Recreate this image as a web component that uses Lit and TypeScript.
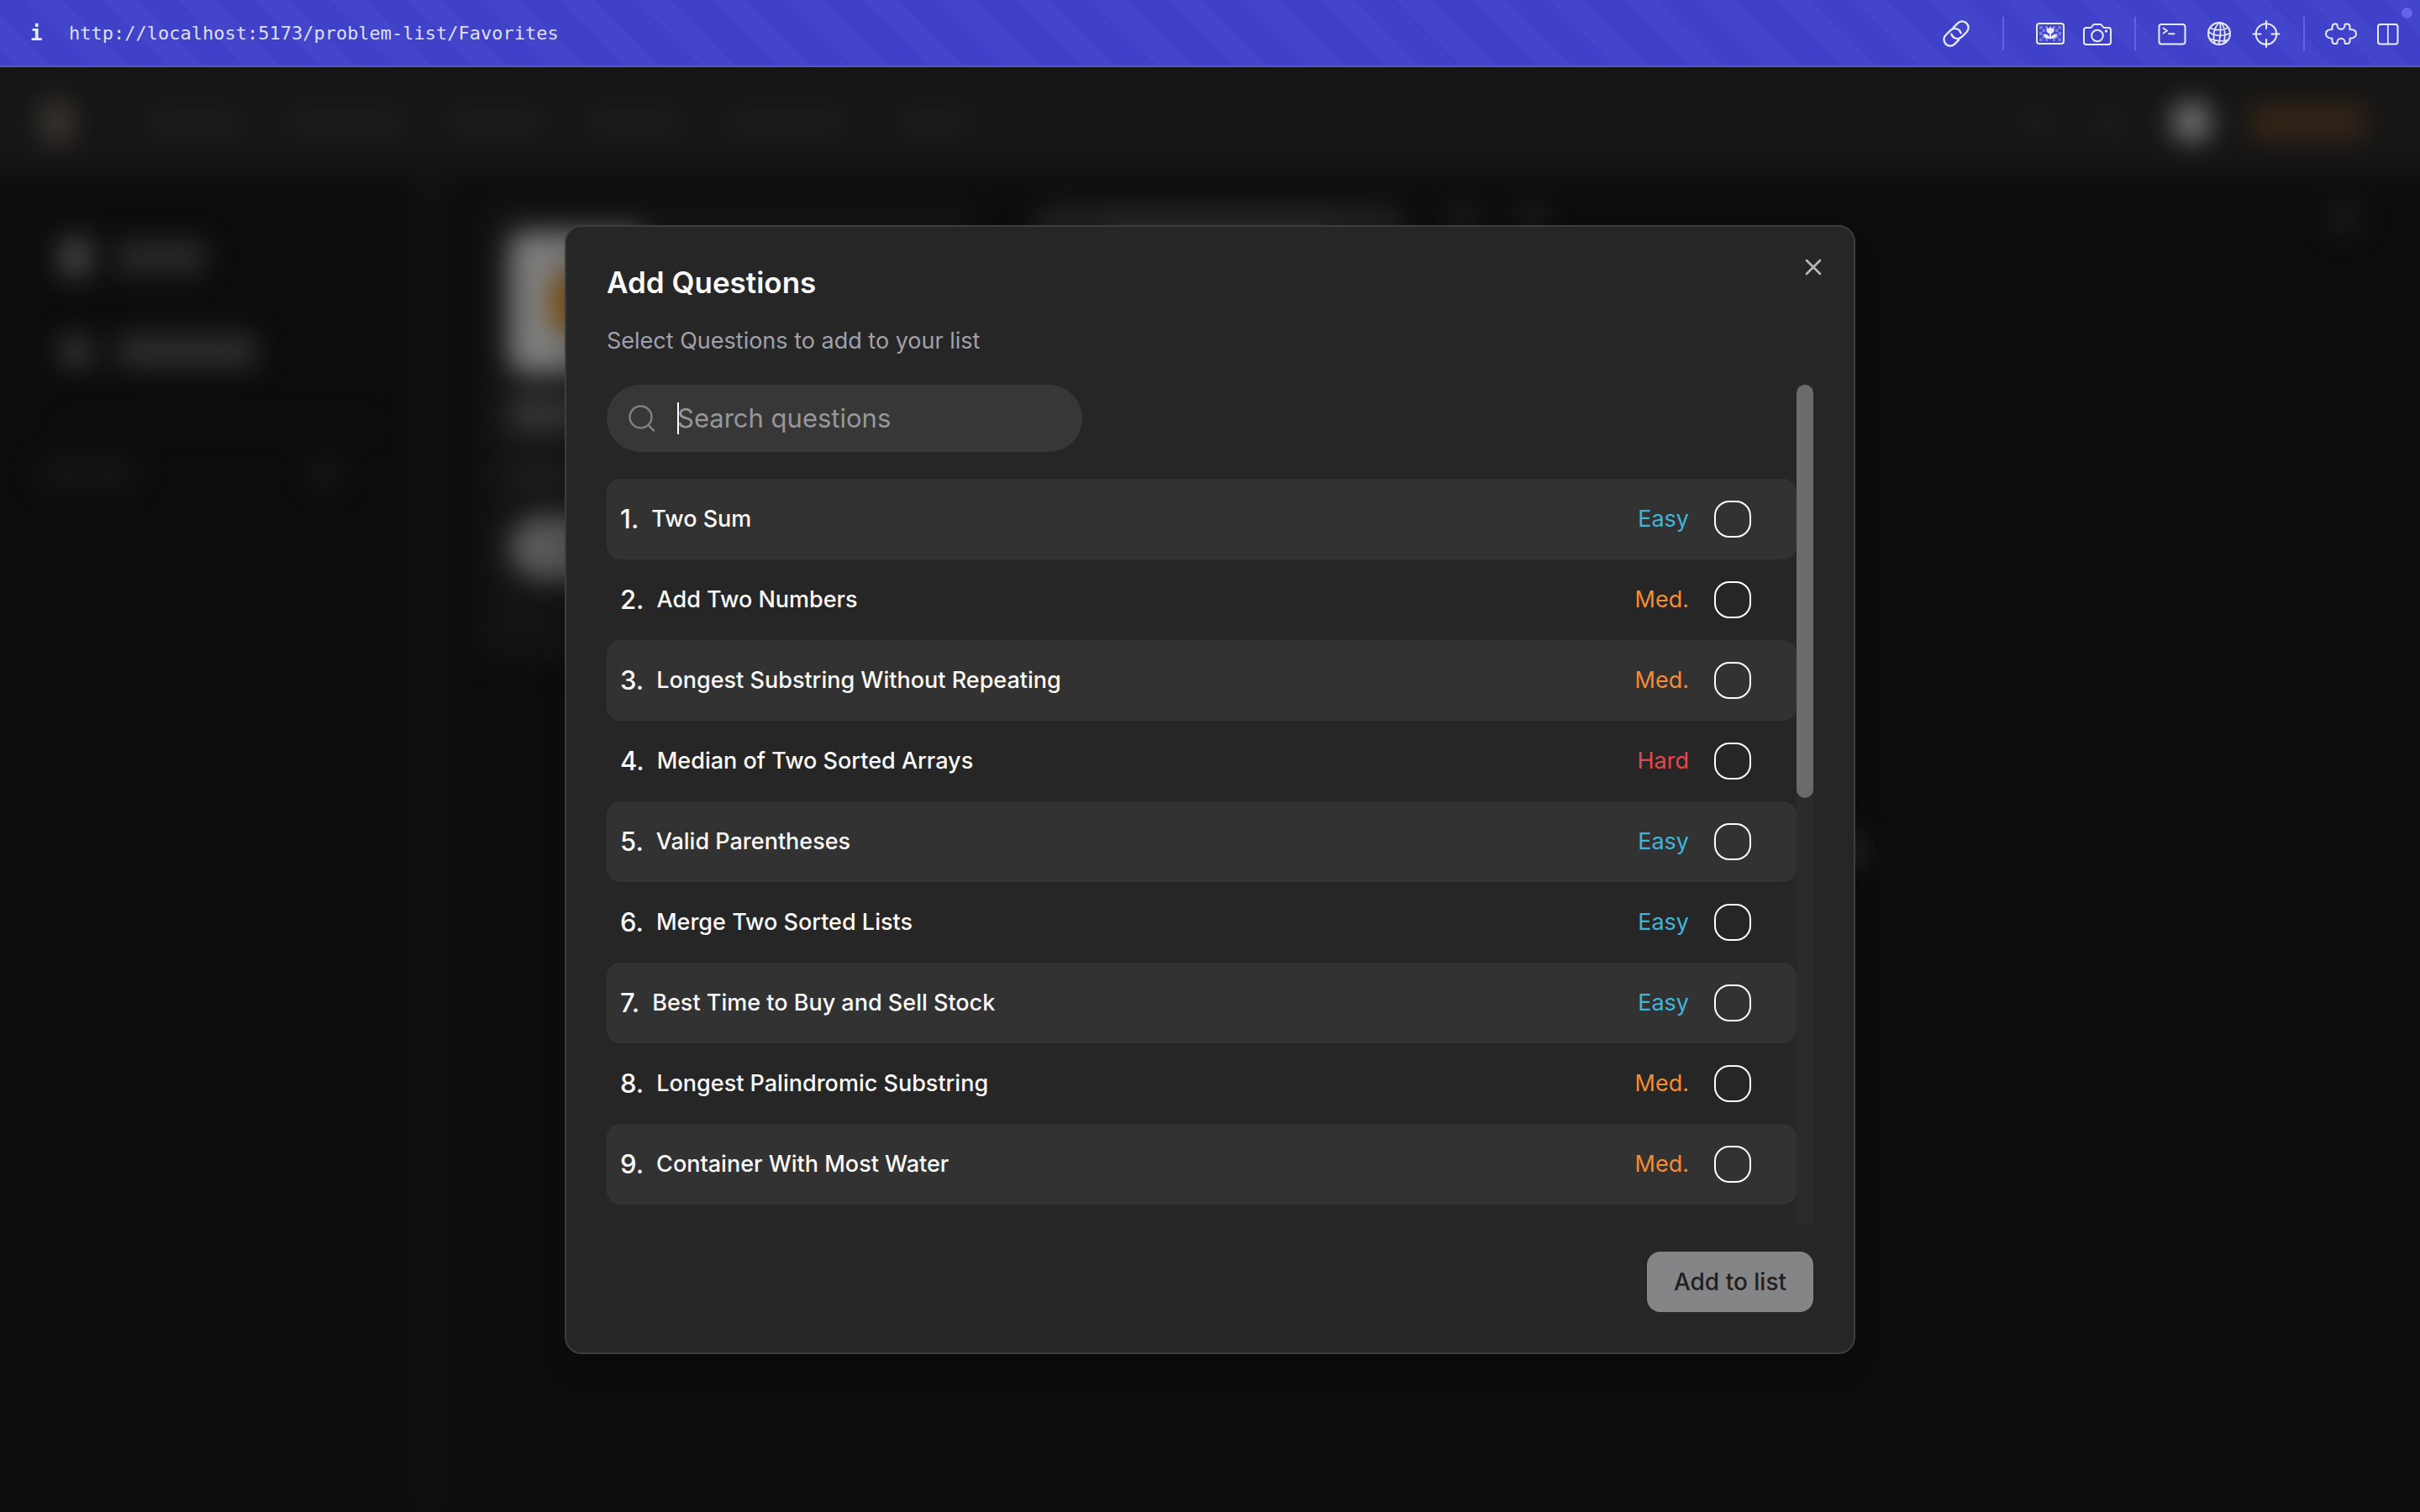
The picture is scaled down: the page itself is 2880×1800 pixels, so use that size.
import { LitElement, html, css, svg } from "lit";
import { customElement, property } from "lit/decorators.js";

type Level = "Easy" | "Med." | "Hard";

interface Question {
  id: number;
  title: string;
  level: Level;
}

const QUESTIONS: Question[] = [
  { id: 1, title: "Two Sum", level: "Easy" },
  { id: 2, title: "Add Two Numbers", level: "Med." },
  { id: 3, title: "Longest Substring Without Repeating", level: "Med." },
  { id: 4, title: "Median of Two Sorted Arrays", level: "Hard" },
  { id: 5, title: "Valid Parentheses", level: "Easy" },
  { id: 6, title: "Merge Two Sorted Lists", level: "Easy" },
  { id: 7, title: "Best Time to Buy and Sell Stock", level: "Easy" },
  { id: 8, title: "Longest Palindromic Substring", level: "Med." },
  { id: 9, title: "Container With Most Water", level: "Med." },
];

const LEVEL_CLASS: Record<Level, string> = { Easy: "easy", "Med.": "medium", Hard: "hard" };

/* Toolbar icons share a 40x40 grid centred on (20, 20). */
const ICONS = {
  link: svg`
    <g transform="rotate(-45 20 20)" stroke-width="2.3">
      <path d="M17 27.500H10a7.500 7.500 0 0 1 0-15h8a7.500 7.500 0 0 1 6.500 11" />
      <path d="M23 12.500H30a7.500 7.500 0 0 1 0 15h-8a7.500 7.500 0 0 1-6.500-11" />
    </g>`,
  picture: svg`
    <g fill="currentColor" stroke="none" opacity=".35">
      <path d="M7 11h3.500v3.500H7zM10.500 14.500h3.500v3.500h-3.500zM7 18h3.500v4H7zM10.500 22h3.500v3.500h-3.500zM7 25.500h3.500v3.500H7zM29.500 11H33v3.500h-3.500zM26 14.500h3.500v3.500H26zM29.500 18H33v4h-3.500zM26 22h3.500v3.500H26zM29.500 25.500H33v3.500h-3.500zM14 25.500h3v3.500h-3zM23 25.500h3v3.500h-3zM14 11h3v2h-3zM23 11h3v2h-3z" />
    </g>
    <rect x="4" y="8" width="32" height="24" rx="3" />
    <path fill="currentColor" stroke="none" d="M15.500 12.500l2.500 1.500 2-2.500 2 2.500 2.500-1.500v3.800a4.500 3.700 0 0 1-3.500 3.600v4.200c1-2.500 3.500-3.900 7.200-3.600-.3 3.800-3 5.700-7.200 5.700h-2c-4.200 0-6.900-1.900-7.200-5.700 3.700-.3 6.200 1.100 7.200 3.600v-4.200a4.500 3.700 0 0 1-3.500-3.600z" />`,
  camera: svg`
    <path d="M7 13h4.500c1 0 1.500-.4 2-1.200l1-1.500c.5-.9 1.200-1.300 2.200-1.300h6.600c1 0 1.700.4 2.200 1.300l1 1.500c.5.800 1 1.200 2 1.200H33c1.800 0 3 1.200 3 3v14c0 1.800-1.200 3-3 3H7c-1.800 0-3-1.200-3-3V16c0-1.800 1.200-3 3-3z" />
    <circle cx="20" cy="22.500" r="6.800" />
    <circle cx="30.500" cy="17" r="1.700" fill="currentColor" stroke="none" />`,
  terminal: svg`
    <rect x="4.500" y="9" width="31" height="23.500" rx="3" />
    <path d="M9.500 13.500l4.500 3-4.500 3M16 20.300h6.500" />`,
  globe: svg`
    <circle cx="20" cy="20" r="13" />
    <path stroke-width="1.700" d="M20 7c-6 6-8 15-5 25M21 7c1 7 .5 17-1.500 26M22 7c5 5 6 13 3.500 25M9 13c6 3.500 15 3.500 22 0M7.500 18c7 5 17 6 25.500 1.500M8.500 26c6 2.500 15 3.500 22 1.500" />`,
  target: svg`
    <circle cx="20" cy="20.500" r="12.300" />
    <path d="M20 5v9M20 27v9M4.500 20.500h9M26.500 20.500h9" />`,
  puzzle: svg`
    <path d="M9.500 15V12c0-2 1-3.500 3-3.500h1.800c1.200 0 1.200 1 1.200 1.800a4.500 4.500 0 0 0 9 0c0-.8 0-1.800 1.200-1.800h1.800c2 0 3 1.500 3 3.500v3c4.500 0 7.500 2 7.500 5.300s-3 5.400-7.500 5.400V28.500c0 2-1 3.500-3 3.500h-1.800c-1.200 0-1.200-1-1.200-1.800a4.500 4.500 0 0 0-9 0c0 .8 0 1.800-1.200 1.800h-1.800c-2 0-3-1.500-3-3.500v-2.800c-4.500 0-7.500-2.100-7.500-5.400S5 15 9.500 15z" />`,
  columns: svg`
    <rect x="8" y="9" width="23.500" height="23.500" rx="3" />
    <path d="M19.800 9v23.500" stroke-width="1.700" />`,
};

type IconName = keyof typeof ICONS;

@customElement("browser-bar")
class BrowserBar extends LitElement {
  static styles = css`
    :host {
      display: block;
    }
    .bar {
      box-sizing: border-box;
      height: 80px;
      display: flex;
      align-items: center;
      padding: 2px 10px 0 36px;
      border-bottom: 2px solid #5257d2;
      color: #e9e9fc;
      background: repeating-linear-gradient(
        45deg,
        #3f42c8 0 14px,
        #4346cb 14px 43px,
        #3f42c8 43px 64px
      );
      font-family: "DejaVu Sans Mono", "Liberation Mono", monospace;
      position: relative;
    }
    .info {
      width: 46px;
      font-size: 24px;
      font-weight: 700;
      line-height: 32px;
    }
    .address {
      flex: 1;
      font-size: 22px;
      line-height: 32px;
      color: #dedffa;
      text-decoration: none;
    }
    .tools {
      display: flex;
      align-items: center;
    }
    .tool {
      display: grid;
      place-items: center;
      width: 56px;
      height: 56px;
      padding: 0;
      border: 0;
      background: none;
      color: inherit;
    }
    .tool svg {
      width: 40px;
      height: 40px;
      fill: none;
      stroke: currentColor;
      stroke-width: 2;
      stroke-linecap: round;
      stroke-linejoin: round;
    }
    .divider {
      width: 2px;
      height: 40px;
      margin: 0 15px 0 16px;
      background: #6063e4;
    }
    .divider.wide {
      margin: 0 27px;
    }
    .dot {
      position: absolute;
      top: 9px;
      right: 9px;
      width: 13px;
      height: 13px;
      border-radius: 50%;
      background: #6564ea;
    }
  `;

  private tool(name: IconName, label: string) {
    return html`<button class="tool" type="button" aria-label=${label}>
      <svg viewBox="0 0 40 40" aria-hidden="true">${ICONS[name]}</svg>
    </button>`;
  }

  render() {
    return html`
      <header class="bar">
        <span class="info">i</span>
        <a class="address" href="http://localhost:5173/problem-list/Favorites"
          >http://localhost:5173/problem-list/Favorites</a
        >
        <div class="tools">
          ${this.tool("link", "Copy link")}
          <span class="divider wide"></span>
          ${this.tool("picture", "Capture area")} ${this.tool("camera", "Screenshot")}
          <span class="divider"></span>
          ${this.tool("terminal", "Console")} ${this.tool("globe", "Network")}
          ${this.tool("target", "Inspect")}
          <span class="divider"></span>
          ${this.tool("puzzle", "Extensions")} ${this.tool("columns", "Split view")}
        </div>
        <span class="dot"></span>
      </header>
    `;
  }
}

/* The dimmed, out-of-focus page that lies behind the dialog. */
@customElement("page-backdrop")
class PageBackdrop extends LitElement {
  static styles = css`
    :host {
      display: block;
      overflow: hidden;
      background: #0d0d0d;
    }
    .page {
      min-height: 100%;
      display: flex;
      flex-direction: column;
      filter: blur(16px);
    }
    .nav {
      display: flex;
      align-items: center;
      gap: 50px;
      margin: -40px -40px 0;
      padding: 40px 104px 0 88px;
      height: 130px;
      background: #151515;
    }
    .logo {
      width: 40px;
      height: 56px;
      border-radius: 16px;
      margin-right: 36px;
      background: linear-gradient(90deg, #3a3937, #3c3228);
    }
    .word {
      height: 28px;
      border-radius: 8px;
      background: #1e1e1e;
    }
    .w90 { width: 88px; margin-left: 12px; }
    .w110 { width: 116px; }
    .w140 { width: 142px; }
    .grow { flex: 1; }
    .glyph {
      width: 36px;
      height: 36px;
      border-radius: 50%;
      background: #1d1d1d;
    }
    .avatar {
      width: 48px;
      height: 48px;
      border-radius: 50%;
      margin: 0 -6px 0 6px;
      background: #747474;
    }
    .premium {
      width: 140px;
      height: 44px;
      border-radius: 12px;
      background: #352517;
    }
    .body {
      flex: 1;
      display: grid;
      grid-template-columns: 524px 1fr;
    }
    .side {
      border-right: 24px solid #141414;
      padding: 72px 48px 0 72px;
      display: flex;
      flex-direction: column;
      gap: 64px;
    }
    .entry {
      display: flex;
      align-items: center;
      gap: 32px;
      height: 48px;
    }
    .entry .mark {
      width: 36px;
      height: 44px;
      background: #484848;
    }
    .entry.plan .mark {
      height: 32px;
      background: #3a3a3a;
    }
    .entry .name {
      width: 104px;
      height: 36px;
      background: #2c2c2c;
    }
    .entry.plan .name {
      width: 164px;
      background: #303030;
    }
    .rule {
      height: 3px;
      background: #1a1a1a;
    }
    .lists {
      display: flex;
      justify-content: space-between;
      margin: -24px 48px 0 -24px;
    }
    .lists .label {
      width: 112px;
      height: 28px;
      background: #171717;
    }
    .lists .plus {
      width: 36px;
      height: 28px;
      background: #181818;
    }
    .main {
      display: grid;
      grid-template-columns: 592px 1fr;
      gap: 64px;
      align-items: start;
      padding: 28px 72px 0 46px;
    }
    .card {
      box-sizing: border-box;
      height: 548px;
      padding: 38px 36px;
      border-radius: 24px;
      background: #131313;
      display: flex;
      flex-direction: column;
      align-items: start;
      gap: 24px;
    }
    .cover {
      display: grid;
      place-items: center;
      width: 164px;
      height: 168px;
      border-radius: 16px;
      background: #7c7c7c;
    }
    .cover .star {
      width: 64px;
      height: 72px;
      border-radius: 24px;
      background: #80510f;
    }
    .heading {
      width: 200px;
      height: 48px;
      background: #333;
    }
    .note {
      width: 240px;
      height: 30px;
      margin: 12px 0 8px;
      background: #1f1f1f;
    }
    .pill {
      width: 240px;
      height: 76px;
      border-radius: 40px;
      background: #595959;
    }
    .row {
      display: flex;
      align-items: start;
      gap: 48px;
    }
    .query {
      display: grid;
      place-items: center;
      width: 448px;
      height: 68px;
      border-radius: 34px;
      background: #1f1f1f;
    }
    .query .hint {
      width: 270px;
      height: 28px;
      background: #2a2a2a;
    }
    .column {
      display: flex;
      flex-direction: column;
      gap: 686px;
      padding-top: 4px;
    }
    .line {
      align-self: start;
      margin-left: 500px;
      width: 490px;
      height: 36px;
      background: #282828;
    }
  `;

  render() {
    return html`
      <div class="page" aria-hidden="true">
        <div class="nav">
          <div class="logo"></div>
          <div class="word w110"></div>
          <div class="word w140"></div>
          <div class="word w110"></div>
          <div class="word w110"></div>
          <div class="word w140"></div>
          <div class="word w90"></div>
          <div class="grow"></div>
          <div class="glyph"></div>
          <div class="glyph"></div>
          <div class="avatar"></div>
          <div class="premium"></div>
        </div>
        <div class="body">
          <div class="side">
            <div class="entry"><div class="mark"></div><div class="name"></div></div>
            <div class="entry plan"><div class="mark"></div><div class="name"></div></div>
            <div class="rule"></div>
            <div class="lists"><div class="label"></div><div class="plus"></div></div>
          </div>
          <div class="main">
            <div class="card">
              <div class="cover"><div class="star"></div></div>
              <div class="heading"></div>
              <div class="note"></div>
              <div class="pill"></div>
            </div>
            <div class="column">
              <div class="row">
                <div class="query"><div class="hint"></div></div>
                <div class="glyph"></div>
                <div class="glyph"></div>
                <div class="grow"></div>
                <div class="glyph"></div>
              </div>
              <div class="line"></div>
            </div>
          </div>
        </div>
      </div>
    `;
  }
}

@customElement("question-row")
class QuestionRow extends LitElement {
  @property({ attribute: false }) question!: Question;

  static styles = css`
    :host {
      display: block;
    }
    .row {
      display: flex;
      align-items: center;
      height: 96px;
      padding: 0 54px 0 16px;
      border-radius: 16px;
      font-size: 27px;
      font-weight: 500;
      line-height: 40px;
      color: #fafafa;
    }
    .striped {
      background: #323232;
    }
    .number {
      margin-right: 15px;
      font-size: 31px;
    }
    .title {
      flex: 1;
    }
    .level {
      margin-right: 30px;
      font-weight: 400;
    }
    .easy { color: #40b5dc; }
    .medium { color: #f28d35; }
    .hard { color: #e5484d; }
    .check {
      appearance: none;
      box-sizing: border-box;
      width: 44px;
      height: 44px;
      margin: 0;
      border: 2px solid #fff;
      border-radius: 18px;
    }
    .check:checked {
      background: #40b5dc;
    }
  `;

  render() {
    const q = this.question;
    return html`
      <label class="row ${q.id % 2 ? "striped" : ""}">
        <span class="number">${q.id}.</span>
        <span class="title">${q.title}</span>
        <span class="level ${LEVEL_CLASS[q.level]}">${q.level}</span>
        <input class="check" type="checkbox" />
      </label>
    `;
  }
}

@customElement("add-questions-dialog")
class AddQuestionsDialog extends LitElement {
  static styles = css`
    :host {
      display: block;
    }
    .dialog {
      position: relative;
      box-sizing: border-box;
      display: flex;
      flex-direction: column;
      gap: 32px;
      padding: 48px;
      border: 2px solid #3d3d3d;
      border-radius: 20px;
      background: #262626;
      box-shadow: 0 20px 30px rgba(0, 0, 0, 0.2);
      color: #fafafa;
    }
    .heading {
      margin: 0;
      font-size: 35px;
      font-weight: 600;
      line-height: 36px;
    }
    .summary {
      margin: 0;
      font-size: 27px;
      line-height: 40px;
      color: #a1a1aa;
    }
    .close {
      position: absolute;
      top: 32px;
      right: 32px;
      width: 32px;
      height: 32px;
      padding: 0;
      border: 0;
      background: none;
      color: #b9b9b9;
    }
    .close svg {
      display: block;
      width: 32px;
      height: 32px;
    }
    .viewport {
      display: grid;
      grid-template-columns: 1fr 20px;
      height: 1000px;
    }
    .scroller {
      min-height: 0;
      overflow-y: scroll;
      scrollbar-width: none;
    }
    .track {
      display: flex;
      flex-direction: column;
      min-height: 0;
      background: #2b2b2b;
    }
    .thumb {
      height: 492px;
      border-radius: 10px;
      background: #6b6b6b;
    }
    .search {
      position: relative;
      box-sizing: border-box;
      display: flex;
      align-items: center;
      gap: 24px;
      width: 566px;
      height: 80px;
      margin-bottom: 32px;
      padding: 0 24px;
      border-radius: 40px;
      background: #373737;
    }
    .search svg {
      flex: none;
      width: 36px;
      height: 36px;
      color: #808080;
    }
    .field {
      flex: 1;
      min-width: 0;
      padding: 0;
      border: 0;
      outline: 0;
      background: none;
      color: #fff;
      font: inherit;
      font-size: 31px;
      line-height: 40px;
    }
    .field::placeholder {
      color: #979797;
      opacity: 1;
    }
    .caret {
      position: absolute;
      left: 84px;
      top: 21px;
      width: 2px;
      height: 38px;
      background: #fff;
    }
    .rows {
      min-height: 1920px;
      margin: 0;
      padding: 0;
      list-style: none;
    }
    .footer {
      display: flex;
      justify-content: flex-end;
    }
    .submit {
      height: 72px;
      padding: 0 32px;
      border: 0;
      border-radius: 16px;
      background: #858587;
      color: #202021;
      font: inherit;
      font-size: 28px;
      font-weight: 500;
    }
  `;

  render() {
    return html`
      <section class="dialog" role="dialog" aria-labelledby="heading">
        <h2 class="heading" id="heading">Add Questions</h2>
        <p class="summary">Select Questions to add to your list</p>
        <div class="viewport">
          <div class="scroller">
            <label class="search">
              <svg viewBox="0 0 36 36" fill="none" stroke="currentColor" stroke-width="2.5" stroke-linecap="round" aria-hidden="true">
                <circle cx="16.5" cy="16.5" r="13" />
                <path d="M26 26.5l6 6" />
              </svg>
              <input class="field" type="text" placeholder="Search questions" aria-label="Search questions" />
              <span class="caret"></span>
            </label>
            <ul class="rows">
              ${QUESTIONS.map(
                (q) => html`<li><question-row .question=${q}></question-row></li>`
              )}
            </ul>
          </div>
          <div class="track" aria-hidden="true"><div class="thumb"></div></div>
        </div>
        <div class="footer">
          <button class="submit" type="button">Add to list</button>
        </div>
        <button class="close" type="button" aria-label="Close">
          <svg viewBox="0 0 24 24" fill="none" stroke="currentColor" stroke-width="2" stroke-linecap="round" aria-hidden="true">
            <path d="M6 6l12 12M18 6L6 18" />
          </svg>
        </button>
      </section>
    `;
  }
}

@customElement("app-root")
class AppRoot extends LitElement {
  static styles = css`
    :host {
      display: flex;
      flex-direction: column;
      min-height: 100vh;
      background: #0d0d0d;
      font-family: Inter, "Liberation Sans", sans-serif;
    }
    .stage {
      flex: 1;
      display: grid;
      grid-template: 1fr / 1fr;
      overflow: hidden;
    }
    .backdrop {
      grid-area: 1 / 1;
    }
    .modal {
      grid-area: 1 / 1;
      place-self: center;
      width: 90%;
      max-width: 1536px;
      z-index: 1;
    }
  `;

  render() {
    return html`
      <browser-bar></browser-bar>
      <main class="stage">
        <page-backdrop class="backdrop"></page-backdrop>
        <add-questions-dialog class="modal"></add-questions-dialog>
      </main>
    `;
  }
}
